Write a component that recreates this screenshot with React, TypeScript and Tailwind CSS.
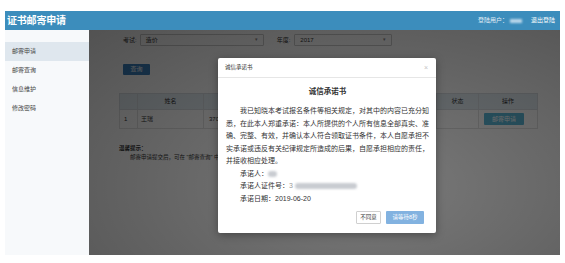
import * as React from 'react';

const FONT = '"Liberation Sans", "Noto Sans CJK SC", sans-serif';

const MENU = ['邮寄申请', '邮寄查询', '信息维护', '修改密码'];

const PLEDGE_LINES = [
  '我已知晓本考试报名条件等相关规定，对其中的内容已充分知',
  '悉，在此本人郑重承诺：本人所提供的个人所有信息全部真实、准',
  '确、完整、有效，并确认本人符合领取证书条件，本人自愿承担不',
  '实承诺或违反有关纪律规定所造成的后果，自愿承担相应的责任，',
  '并接收相应处理。',
];

// blurred-out personal data
function Redacted({ w }: { w: number }) {
  return (
    <span
      className="inline-block h-[6px] rounded-full bg-[#c9ccd1] blur-[1px] align-middle"
      style={{ width: w }}
    />
  );
}

function Sidebar() {
  return (
    <aside className="w-[84px] shrink-0 bg-[#f7f9fb] pt-[12px]">
      {MENU.map((item, i) => (
        <div
          key={item}
          className={
            'h-[19px] pl-[7px] flex items-center text-[6px] text-[#444] ' +
            (i === 0 ? 'bg-[#dfe7ee]' : '')
          }
        >
          {item}
        </div>
      ))}
    </aside>
  );
}

function PledgeModal() {
  return (
    <div className="absolute left-[129px] top-[28px] z-20 w-[218px] h-[175px] bg-white rounded-[2px] shadow-[0_2px_8px_rgba(0,0,0,0.35)] flex flex-col">
      <div className="h-[20px] shrink-0 px-[7px] flex items-center justify-between border-b border-[#e6e6e6]">
        <span className="text-[5.5px] text-[#333]">诚信承诺书</span>
        <span className="text-[7px] leading-none text-[#c4c4c4] pr-[1px]">×</span>
      </div>
      <div className="flex-1 pl-[8px] pr-[7px] pt-[8px] text-[#333]">
        <div className="text-center text-[7.5px] leading-[12px] font-bold">诚信承诺书</div>
        <div className="mt-[7px] text-[7px] leading-[12.5px]">
          {PLEDGE_LINES.map((line, i) => (
            <div key={i} className={'whitespace-nowrap ' + (i === 0 ? 'pl-[14px]' : '')}>
              {line}
            </div>
          ))}
          <div className="pl-[14px] whitespace-nowrap flex items-center">
            承诺人：<Redacted w={9} />
          </div>
          <div className="pl-[14px] whitespace-nowrap flex items-center">
            承诺人证件号：<span className="text-[#999] mr-[2px]">3</span>
            <Redacted w={62} />
          </div>
          <div className="pl-[14px] whitespace-nowrap">承诺日期：2019-06-20</div>
        </div>
        <div className="mt-[6px] pr-[5px] flex justify-end gap-[5px]">
          <button className="h-[13px] w-[25px] border border-[#d0d0d0] bg-white text-[5.5px] text-[#333] rounded-[1px]">
            不同意
          </button>
          <button className="h-[13px] w-[38px] bg-[#82b2e0] text-[5.5px] text-white rounded-[1px]">
            请等待8秒
          </button>
        </div>
      </div>
    </div>
  );
}

function MainContent() {
  return (
    <main className="relative flex-1 bg-white overflow-hidden">
      <div className="pl-[34px] pt-[4px] flex items-center text-[6px] text-[#333]">
        <span>考试:</span>
        <div className="ml-[3px] w-[124px] h-[12px] border border-[#ccc] rounded-[1px] px-[5px] flex items-center justify-between">
          <span>造价</span>
          <span className="text-[5px] text-[#888]">▾</span>
        </div>
        <span className="ml-[13px]">年度:</span>
        <div className="ml-[4px] w-[98px] h-[12px] border border-[#ccc] rounded-[1px] px-[5px] flex items-center justify-between">
          <span>2017</span>
          <span className="text-[5px] text-[#888]">▾</span>
        </div>
      </div>

      <div className="pl-[34px] mt-[8px]">
        <button className="w-[27px] h-[11px] bg-[#3a80bd] text-[6px] text-white rounded-[1px]">查询</button>
      </div>

      <table className="ml-[30px] mt-[15px] w-[418px] table-fixed border-collapse text-[6px] text-[#333]">
        <colgroup>
          <col className="w-[18px]" />
          <col className="w-[66px]" />
          <col className="w-[110px]" />
          <col className="w-[60px]" />
          <col className="w-[63px]" />
          <col className="w-[42px]" />
          <col className="w-[59px]" />
        </colgroup>
        <thead>
          <tr className="h-[16px] bg-[#e3edf3]">
            <th className="border border-[#d8dde2] font-normal"></th>
            <th className="border border-[#d8dde2] font-normal">姓名</th>
            <th className="border border-[#d8dde2] font-normal">证件号码</th>
            <th className="border border-[#d8dde2] font-normal">考试</th>
            <th className="border border-[#d8dde2] font-normal">年度</th>
            <th className="border border-[#d8dde2] font-normal">状态</th>
            <th className="border border-[#d8dde2] font-normal">操作</th>
          </tr>
        </thead>
        <tbody>
          <tr className="h-[19px]">
            <td className="border border-[#e2e2e2] pl-[4px]">1</td>
            <td className="border border-[#e2e2e2] pl-[3px]">王瑞</td>
            <td className="border border-[#e2e2e2] pl-[5px]">370000000000000000</td>
            <td className="border border-[#e2e2e2] pl-[4px]">造价</td>
            <td className="border border-[#e2e2e2] pl-[4px]">2017</td>
            <td className="border border-[#e2e2e2]"></td>
            <td className="border border-[#e2e2e2] pl-[5px]">
              <button className="w-[40px] h-[12px] bg-[#5bb8d8] text-[6px] text-white rounded-[1px]">邮寄申请</button>
            </td>
          </tr>
        </tbody>
      </table>

      <div className="ml-[30px] mt-[15px] text-[5.5px] leading-[9px] text-[#333]">
        <div className="font-bold">温馨提示：</div>
        <div className="pl-[11px]">邮寄申请提交后，可在 "邮寄查询" 中查看邮寄状态及物流信息。</div>
      </div>

      {/* modal backdrop */}
      <div className="absolute inset-0 z-10 bg-[radial-gradient(ellipse_at_60%_70%,rgba(0,0,0,0.52),rgba(0,0,0,0.68))]" />
      <PledgeModal />
    </main>
  );
}

export default function App() {
  return (
    <div className="w-[565px] h-[263px] bg-white pt-[11px] pl-[5px]" style={{ fontFamily: FONT }}>
      <div className="w-[555px] h-[244px] flex flex-col">
        <header className="h-[19px] shrink-0 bg-[#3c8dbc] pl-[2px] pr-[5px] flex items-center justify-between">
          <span className="text-[10px] font-bold text-white tracking-[-0.2px]">证书邮寄申请</span>
          <div className="flex items-center text-[6px] text-[#e4eff7]">
            <span>登陆用户：</span>
            <span className="ml-[2px] inline-block w-[12px] h-[4px] bg-[#b9d6ea] blur-[1px]" />
            <span className="ml-[9px] text-white">退出登陆</span>
          </div>
        </header>
        <div className="flex flex-1 min-h-0">
          <Sidebar />
          <MainContent />
        </div>
      </div>
    </div>
  );
}
